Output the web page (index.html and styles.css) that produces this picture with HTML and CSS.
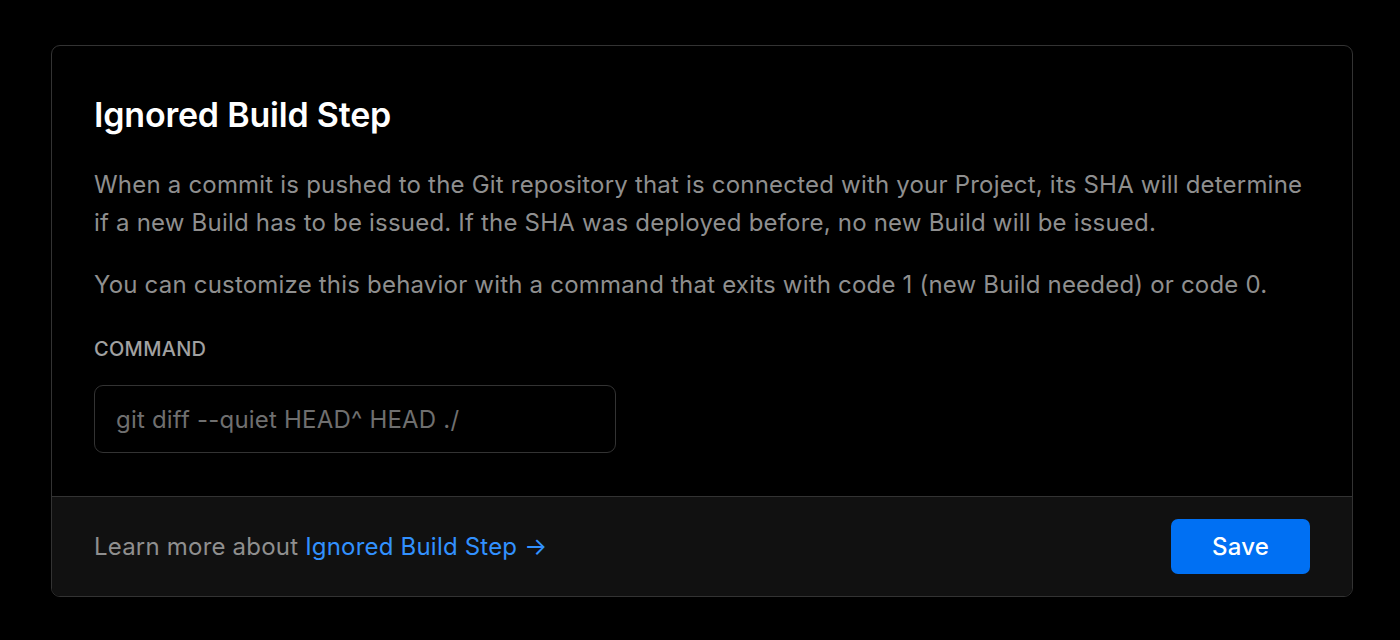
FILE: index.html
```html
<!DOCTYPE html>
<html>
<head>
  <title>Ignored Build Step</title>
  <link rel="stylesheet" href="styles.css">
</head>
<body>

<div class="card">
  <div class="card-body">
    <h2 class="title">Ignored Build Step</h2>
    <p class="text">When a commit is pushed to the Git repository that is connected with your Project, its SHA will determine if a new Build has to be issued. If the SHA was deployed before, no new Build will be issued.</p>
    <p class="text second">You can customize this behavior with a command that exits with code 1 (new Build needed) or code 0.</p>
    <label class="label" for="command">COMMAND</label>
    <input class="input" type="text" id="command" placeholder="git diff --quiet HEAD^ HEAD ./">
  </div>
  <div class="card-footer">
    <span class="note">Learn more about <a href="#">Ignored Build Step →</a></span>
    <button class="save">Save</button>
  </div>
</div>

</body>
</html>
```

FILE: styles.css
```css
body {
  margin: 0;
  padding: 45px 47px 0 51px;
  background: #000;
  font-family: Inter, "Noto Sans", sans-serif;
  color: #fff;
}

.card {
  border: 1px solid #333;
  border-radius: 9px;
  overflow: hidden;
  background: #000;
}

.card-body {
  padding: 49px 42px 43px;
}

.title {
  margin: 0;
  font-size: 34px;
  line-height: 40px;
  font-weight: 600;
  letter-spacing: -0.2px;
}

.text {
  margin: 31px 0 0;
  font-size: 24px;
  line-height: 38px;
  letter-spacing: 0.2px;
  color: #8f8f8f;
}

.text.second {
  margin-top: 24px;
}

.label {
  display: block;
  margin-top: 33px;
  font-size: 20px;
  line-height: 24px;
  font-weight: 500;
  letter-spacing: 0.3px;
  color: #a1a1a1;
}

.input {
  display: block;
  box-sizing: border-box;
  margin-top: 24px;
  width: 522px;
  height: 68px;
  padding: 0 21px;
  border: 1px solid #333;
  border-radius: 9px;
  background: #000;
  font-family: inherit;
  font-size: 24px;
  letter-spacing: 0.2px;
  color: #fff;
  outline: none;
}

.input::placeholder {
  color: #6f6f6f;
}

.card-footer {
  display: flex;
  justify-content: space-between;
  align-items: center;
  height: 99px;
  padding: 0 42px;
  border-top: 1px solid #333;
  background: #111;
}

.note {
  font-size: 24px;
  letter-spacing: 0.2px;
  color: #8f8f8f;
}

.note a {
  color: #3291ff;
  text-decoration: none;
}

.save {
  width: 139px;
  height: 55px;
  border: none;
  border-radius: 7px;
  background: #0070f3;
  color: #fff;
  font-family: inherit;
  font-size: 24px;
  font-weight: 500;
  letter-spacing: 0.2px;
  cursor: pointer;
}
```
